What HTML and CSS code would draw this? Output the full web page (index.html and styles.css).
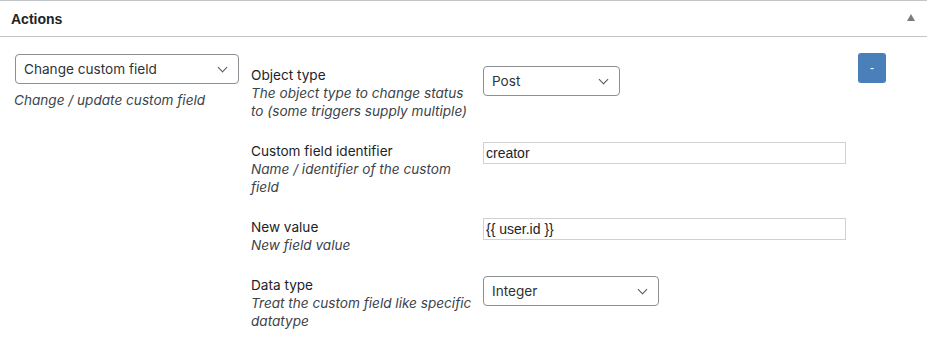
FILE: index.html
```html
<!DOCTYPE html>
<html lang="en">
<head>
    <meta charset="UTF-8">
    <title>Actions</title>
    <link rel="stylesheet" href="styles.css">
</head>
<body>

    <div class="postbox">
        <div class="postbox-header">
            <h2>Actions</h2>
            <span class="toggle-arrow"></span>
        </div>

        <div class="action-row">
            <div class="action-type">
                <div class="select-wrap wide">
                    <select>
                        <option>Change custom field</option>
                    </select>
                </div>
                <p class="description">Change / update custom field</p>
            </div>

            <table class="action-fields">
                <tr>
                    <th>Object type<br><em>The object type to change status to (some triggers supply multiple)</em></th>
                    <td>
                        <div class="select-wrap post">
                            <select><option>Post</option></select>
                        </div>
                    </td>
                </tr>
                <tr>
                    <th>Custom field identifier<br><em>Name / identifier of the custom field</em></th>
                    <td><input type="text" value="creator"></td>
                </tr>
                <tr>
                    <th>New value<br><em>New field value</em></th>
                    <td><input type="text" value="{{ user.id }}"></td>
                </tr>
                <tr>
                    <th>Data type<br><em>Treat the custom field like specific datatype</em></th>
                    <td>
                        <div class="select-wrap datatype">
                            <select><option>Integer</option></select>
                        </div>
                    </td>
                </tr>
            </table>

            <div class="action-remove">
                <button class="button-remove">-</button>
            </div>
        </div>
    </div>

</body>
</html>
```

FILE: styles.css
```css
/* General */
body {
    margin: 0;
    background-color: #fff;
    color: #1d2327;
    font-family: 'Inter', 'Noto Sans', sans-serif;
    font-size: 13.6px;
}

/* Metabox */
.postbox {
    border-top: 1px solid #c3c4c7;
}

.postbox-header {
    display: flex;
    align-items: center;
    justify-content: space-between;
    height: 35px;
    padding: 0 12px 0 11px;
    border-bottom: 1px solid #c3c4c7;
}

.postbox-header h2 {
    margin: 0;
    font-family: 'Liberation Sans', Arial, sans-serif;
    font-size: 14px;
    font-weight: bold;
    color: #1d2327;
}

.toggle-arrow {
    width: 0;
    height: 0;
    border-left: 4px solid transparent;
    border-right: 4px solid transparent;
    border-bottom: 7px solid #787c82;
    margin-top: -2px;
}

/* Action row */
.action-row {
    display: flex;
    align-items: flex-start;
    padding: 17px 0 0 15px;
}

.action-type {
    width: 236px;
}

.description {
    margin: 7px 0 0 -1px;
    font-style: italic;
    color: #3c434a;
    line-height: 18px;
}

/* Selects */
.select-wrap {
    position: relative;
    height: 30px;
}

.select-wrap.wide { width: 224px; }
.select-wrap.post { width: 137px; }
.select-wrap.datatype { width: 176px; }

.select-wrap::after {
    content: "";
    position: absolute;
    right: 13px;
    top: 10px;
    width: 6px;
    height: 6px;
    border-right: 1.5px solid #50575e;
    border-bottom: 1.5px solid #50575e;
    transform: rotate(45deg);
    pointer-events: none;
}

select {
    appearance: none;
    -webkit-appearance: none;
    width: 100%;
    height: 30px;
    margin: 0;
    padding: 0 24px 0 8px;
    border: 1px solid #8c8f94;
    border-radius: 4px;
    background: #fff;
    color: #2c3338;
    font-family: 'Inter', 'Noto Sans', sans-serif;
    font-size: 13.6px;
    box-sizing: border-box;
}

/* Fields table */
.action-fields {
    border-collapse: collapse;
    margin-top: 12px;
}

.action-fields th {
    width: 222px;
    padding: 0 10px 22px 0;
    text-align: left;
    vertical-align: top;
    font-weight: normal;
    line-height: 18px;
    color: #1d2327;
}

.action-fields th em {
    color: #3c434a;
}

.action-fields td {
    padding: 0 0 22px 0;
    vertical-align: top;
}

input[type="text"] {
    width: 363px;
    height: 22px;
    margin: 0;
    padding: 0 2px;
    border: 1px solid #d1d1d1;
    border-radius: 0;
    box-sizing: border-box;
    font-family: 'Liberation Sans', Arial, sans-serif;
    font-size: 14px;
    color: #1d2327;
}

/* Remove button */
.action-remove {
    margin-left: 12px;
    margin-top: -1px;
}

.button-remove {
    width: 28px;
    height: 30px;
    padding: 0;
    border: none;
    border-radius: 3px;
    background-color: #4a80b9;
    color: #fff;
    font-family: 'Liberation Sans', Arial, sans-serif;
    font-size: 12px;
    line-height: 30px;
    cursor: pointer;
}
```
